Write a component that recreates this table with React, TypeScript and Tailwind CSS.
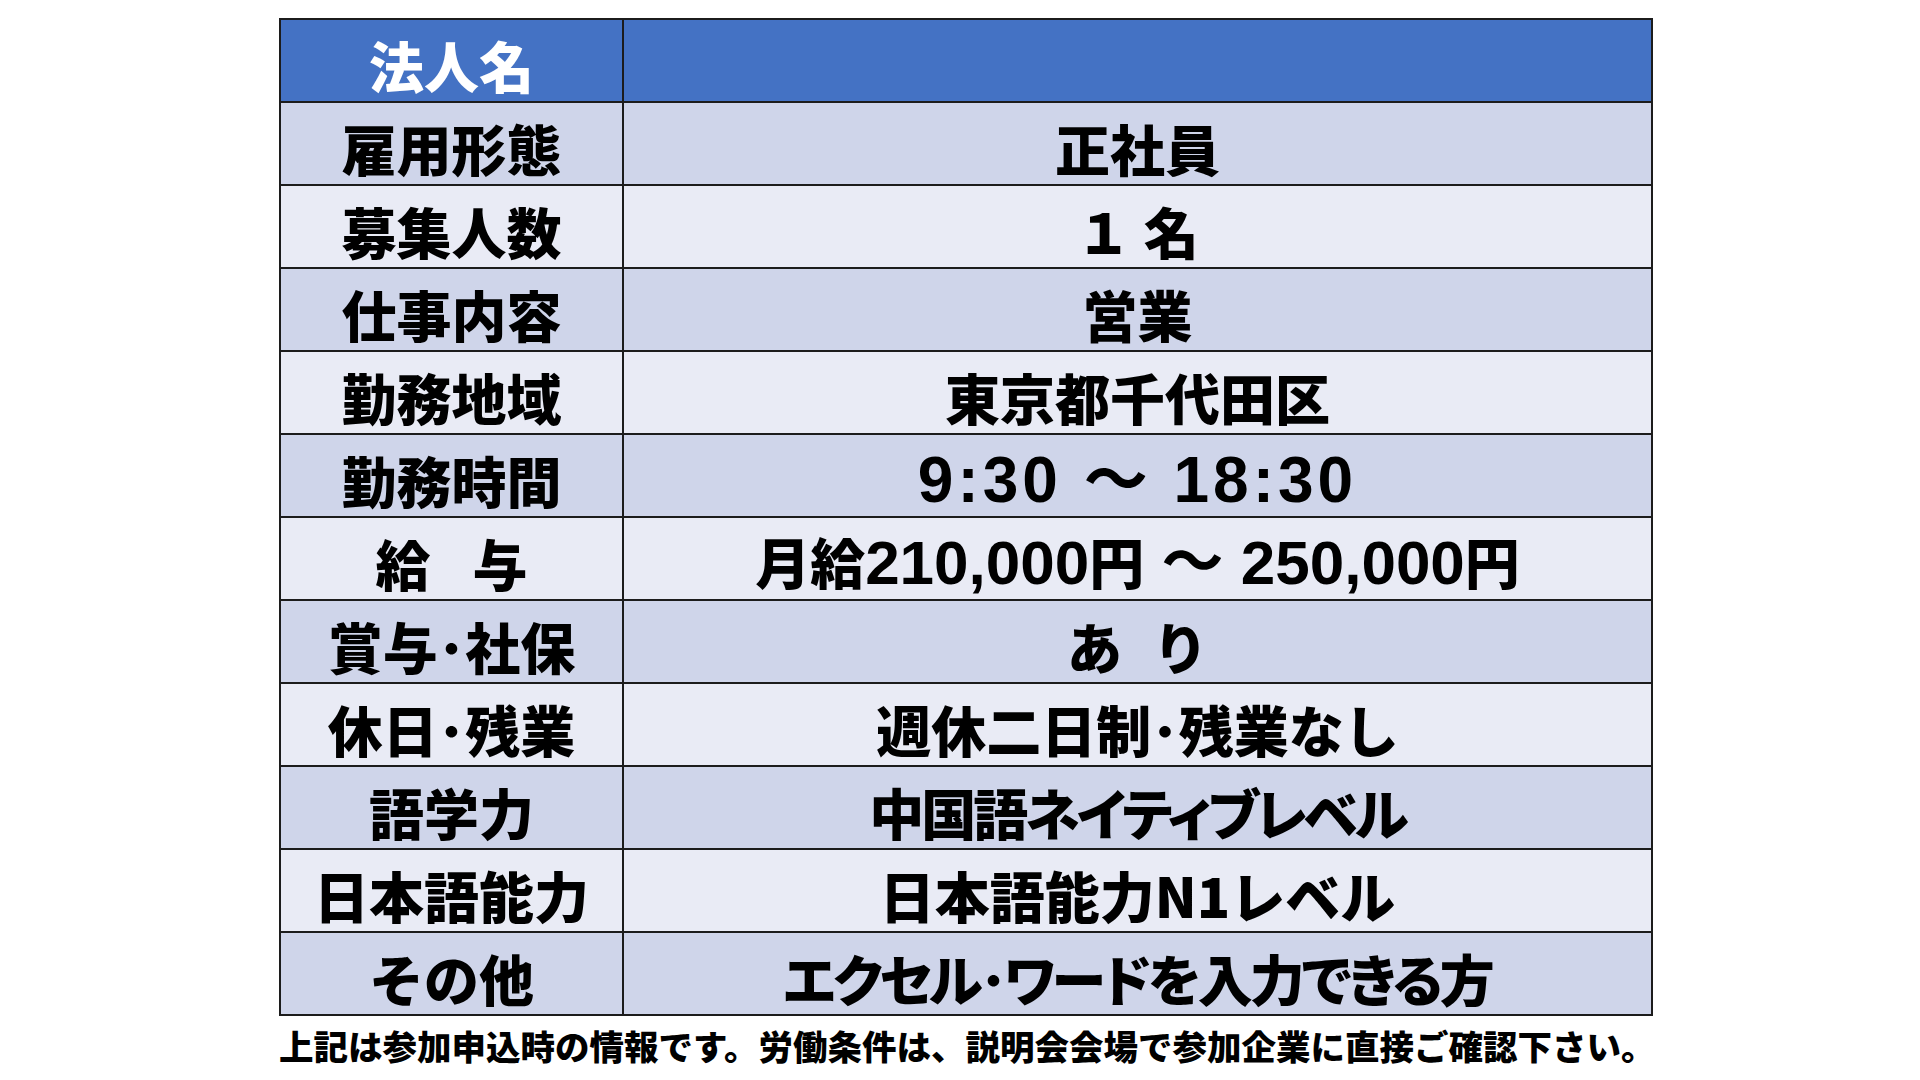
import type { ReactNode } from "react";

const jp = "font-['Noto_Sans_CJK_JP',sans-serif]";
const num = "font-['Liberation_Sans','Noto_Sans_CJK_JP',sans-serif] font-bold";

const rows: { label: ReactNode; value: ReactNode; key: string }[] = [
  { key: "koyou", label: "雇用形態", value: "正社員" },
  { key: "boshu", label: "募集人数", value: "１ 名" },
  { key: "shigoto", label: "仕事内容", value: "営業" },
  { key: "chiiki", label: "勤務地域", value: "東京都千代田区" },
  {
    key: "jikan",
    label: "勤務時間",
    value: <span className={`${num} text-[64px] tracking-[4px]`}>9:30 ～ 18:30</span>,
  },
  {
    key: "kyuyo",
    label: (
      <>
        給<span className="ml-[42px]">与</span>
      </>
    ),
    value: (
      <>
        月給<span className={`${num} text-[62px]`}>210,000</span>円
        <span className={`${num} text-[62px]`}> ～ 250,000</span>円
      </>
    ),
  },
  {
    key: "shoyo",
    label: "賞与･社保",
    value: (
      <>
        あ<span className="ml-[31px]">り</span>
      </>
    ),
  },
  { key: "kyujitsu", label: "休日･残業", value: "週休二日制･残業なし" },
  {
    key: "gogaku",
    label: "語学力",
    value: <span className="tracking-[-3px] [font-feature-settings:'palt']">中国語ネイティブレベル</span>,
  },
  { key: "nihongo", label: "日本語能力", value: "日本語能力N1レベル" },
  {
    key: "sonota",
    label: "その他",
    value: <span className="tracking-[-3px] [font-feature-settings:'palt']">エクセル･ワードを入力できる方</span>,
  },
];

export default function App() {
  return (
    <div className={`min-h-screen w-full bg-white pl-[279px] pt-[18px] ${jp}`}>
      <table className="w-[1374px] border-collapse border-2 border-[#1c1c1c]">
        <tbody>
          <tr className="h-[83px] bg-[#4472c4]">
            <td className="w-[343px] border-2 border-[#1c1c1c] pt-[8px] text-center text-[55px] font-black leading-none text-white">
              法人名
            </td>
            <td className="border-2 border-[#1c1c1c]"></td>
          </tr>
          {rows.map((r, i) => (
            <tr key={r.key} className={`h-[83px] ${i % 2 === 0 ? "bg-[#cfd5ea]" : "bg-[#e9ebf5]"}`}>
              <td className="border-2 border-[#1c1c1c] pt-[8px] text-center text-[55px] font-black leading-none text-black">
                {r.label}
              </td>
              <td className="border-2 border-[#1c1c1c] pt-[8px] text-center text-[55px] font-black leading-none whitespace-nowrap text-black">
                {r.value}
              </td>
            </tr>
          ))}
        </tbody>
      </table>
      <p className="mt-[12px] text-[34.5px] font-black leading-none text-black">
        上記は参加申込時の情報です。労働条件は、説明会会場で参加企業に直接ご確認下さい。
      </p>
    </div>
  );
}
